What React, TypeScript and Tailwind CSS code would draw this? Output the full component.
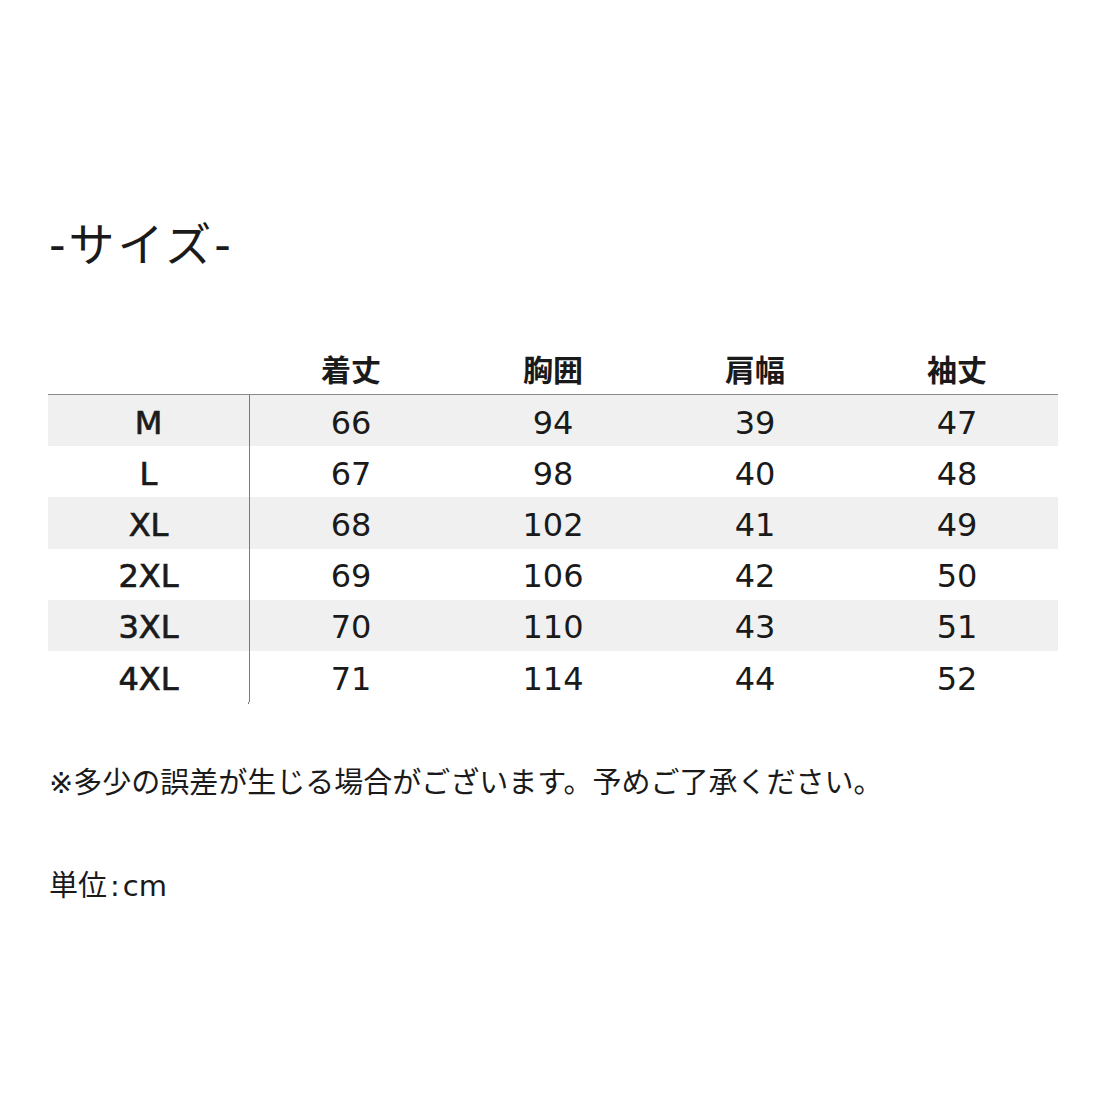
const sizes = [
  { size: 'M', values: ['66', '94', '39', '47'] },
  { size: 'L', values: ['67', '98', '40', '48'] },
  { size: 'XL', values: ['68', '102', '41', '49'] },
  { size: '2XL', values: ['69', '106', '42', '50'] },
  { size: '3XL', values: ['70', '110', '43', '51'] },
  { size: '4XL', values: ['71', '114', '44', '52'] },
];

const headers = ['着丈', '胸囲', '肩幅', '袖丈'];

export default function App() {
  return (
    <div
      className="w-[1100px] h-[1100px] bg-white text-[#1a1a1a] pl-[48px] pt-[216px]"
      style={{ fontFamily: '"DejaVu Sans", "Noto Sans CJK JP", sans-serif' }}
    >
      <h1 className="text-[46px] leading-[58px] font-normal pl-[1px] tracking-[3px]">-サイズ-</h1>

      {/* Size table */}
      <div className="mt-[70px] w-[1010px]">
        <div className="grid grid-cols-5 h-[51px] border-b border-[#8a8a8a] items-center">
          <div />
          {headers.map((h) => (
            <div key={h} className="text-center text-[30px] font-bold leading-none pt-[3px]">
              {h}
            </div>
          ))}
        </div>
        {sizes.map((row, i) => (
          <div
            key={row.size}
            className={`grid grid-cols-5 h-[51.2px] items-center ${i % 2 === 0 ? 'bg-[#f0f0f0]' : 'bg-white'}`}
          >
            <div className="h-full flex items-center justify-center border-r border-[#7a7a7a] pt-[4px]">
              <span className="text-[32px] leading-none [-webkit-text-stroke:0.7px_#1a1a1a]">{row.size}</span>
            </div>
            {row.values.map((v, j) => (
              <div key={j} className="text-center text-[32px] font-normal leading-none pt-[4px]">
                {v}
              </div>
            ))}
          </div>
        ))}
        <div className="w-[201px] h-[2px] border-r border-[#7a7a7a]" />
      </div>

      <p className="mt-[59px] text-[29px] leading-[40px] pl-[1px]">
        ※多少の誤差が生じる場合がございます。予めご了承ください。
      </p>
      <p className="mt-[63px] text-[29px] leading-[40px] pl-[1px]">
        単位<span className="mx-[3px]">:</span>cm
      </p>
    </div>
  );
}
